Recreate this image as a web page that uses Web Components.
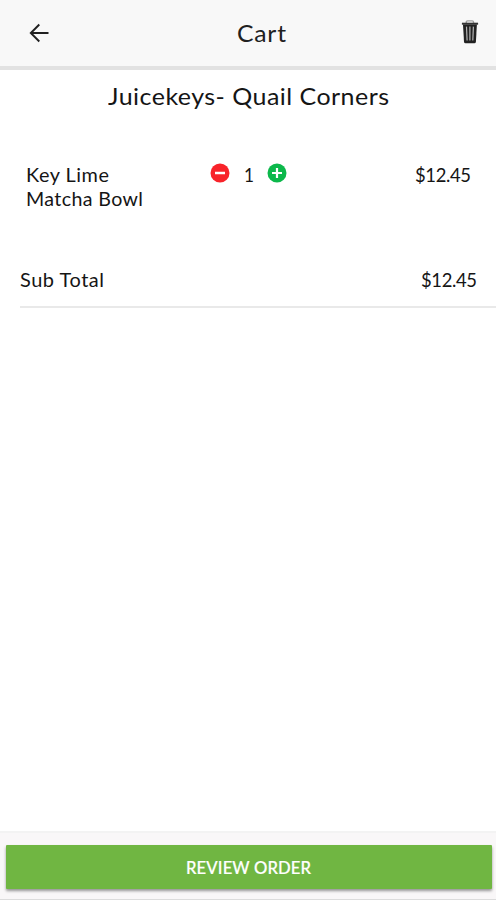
<!DOCTYPE html>
<html lang="en">
<head>
<meta charset="utf-8">
<title>Cart</title>
<style>
html,body{margin:0;height:100%;background:#fff}
body{font-family:Lato,"Open Sans",sans-serif;color:#151515;overflow:hidden}
</style>
</head>
<body>
<cart-screen></cart-screen>
<script>
class Base extends HTMLElement {
  constructor() {
    super();
    this.attachShadow({mode: 'open'}).innerHTML = this.constructor.html;
  }
}

/* A single line of text fitted to a given width, half by glyph width and half by tracking. */
class TrackedText extends Base {
  static html = `<style>:host{display:block;white-space:nowrap}span{display:inline-block;transform-origin:0 50%}</style><span><slot></slot></span>`;
  connectedCallback() {
    const span = this.shadowRoot.querySelector('span');
    const n = this.textContent.length;
    const target = Number(this.getAttribute('width'));
    const natural = span.getBoundingClientRect().width;
    const scale = Math.sqrt(target / natural);
    const gap = (target / scale - natural) / Math.max(1, n - 1);
    span.style.letterSpacing = gap + 'px';
    span.style.transform = `scaleX(${scale})`;
    this.style.width = target + 'px';
  }
}

class CartIcon extends Base {
  static html = `<style>:host{display:block;line-height:0}svg{display:block;overflow:visible}</style>`;
  static shapes = {
    back: [20, 20, '<path d="M19.500 10H1.800M10.300 1.500 1.800 10l8.500 8.500" fill="none" stroke="#202020" stroke-width="1.900"/>'],
    trash: [18, 24, '<path d="M5.3 3.2V2.1Q5.3.9 6.5.9h4.8q1.2 0 1.2 1.2v1.1" fill="none" stroke="#a0a0a0" stroke-width="1.400"/><path d="M.9 2.700h16.200v2H.900z" fill="#333"/><path d="M2 4.500h13.900l-1 17.200q-.1 1.500-1.500 1.500H4.500Q3.100 23.200 3 21.700z" fill="#222"/><path d="M5.500 6.600 6.100 20.500M8.900 6.600v13.900M12.400 6.600l-.6 13.900" stroke="#b5b5b5" stroke-width="1.200"/>'],
    minus: [20, 20, '<circle cx="10" cy="10" r="9.500" fill="#f8232a"/><path d="M5 10h10" stroke="#fff" stroke-width="2.500"/>'],
    plus: [20, 20, '<circle cx="10" cy="10" r="9.500" fill="#0cb84b"/><path d="M5 10h10M10 5v10" stroke="#fff" stroke-width="2.200"/>']
  };
  connectedCallback() {
    const [w, h, body] = CartIcon.shapes[this.getAttribute('name')];
    this.shadowRoot.innerHTML = CartIcon.html + `<svg width="${w}" height="${h}" viewBox="0 0 ${w} ${h}">${body}</svg>`;
  }
}

class CartHeader extends Base {
  static html = `<style>
    :host{display:grid;grid-template-columns:1fr auto 1fr;align-items:center;box-sizing:border-box;height:70px;
      padding:0 17px 0 29px;background:#f8f8f8;border-bottom:4px solid #e2e2e2;font-size:23.500px;line-height:28px;color:#202020}
    ::slotted([slot=end]){justify-self:end;margin-bottom:3px}
    ::slotted([slot=title]){margin-right:-14px}
    </style><slot name="start"></slot><slot name="title"></slot><slot name="end"></slot>`;
}

class CartItem extends Base {
  static html = `<style>
    :host{display:grid;grid-template-columns:184px 1fr auto;align-items:start;font-size:19px;line-height:24px;padding:0 25px 0 26px}
    .qty{display:flex;align-items:flex-start;gap:14px}
    .count{display:flex;justify-content:center;width:9px}
    </style>
    <div><slot name="name"></slot></div>
    <div class="qty"><cart-icon name="minus"></cart-icon><div class="count"><slot name="count"></slot></div><cart-icon name="plus"></cart-icon></div>
    <slot name="price"></slot>`;
}

class CartTotal extends Base {
  static html = `<style>
    :host{display:flex;justify-content:space-between;box-sizing:border-box;height:40px;margin-left:20px;padding-right:19px;
      border-bottom:2px solid #e9e9e9;font-size:19px;line-height:24px}
    </style><slot></slot>`;
}

class CartFooter extends Base {
  static html = `<style>
    :host{display:block;box-sizing:border-box;height:69px;padding:12px 4px 0 6px;background:#f9f7f8;border-top:2px solid #f3f3f3;border-bottom:1px solid #dcdcdc}
    button{display:flex;align-items:center;justify-content:center;box-sizing:border-box;width:100%;height:44px;border:0;border-radius:1px;padding:2px 2px 0 0;
      background:#70b642;color:#fff;font:500 16.500px/22px Lato,sans-serif;-webkit-text-stroke:.2px #fff;box-shadow:0 2px 3px rgba(0,0,0,.4)}
    </style><button><slot></slot></button>`;
}

class CartScreen extends Base {
  static html = `<style>
    :host{display:flex;flex-direction:column;height:100vh}
    .store{align-self:center;font-size:24px;line-height:30px;margin:11px 0 52px 1px}
    cart-total{margin-top:57px}
    cart-footer{margin-top:auto}
    </style>
    <cart-header>
      <cart-icon slot="start" name="back"></cart-icon>
      <tracked-text slot="title" width="49">Cart</tracked-text>
      <cart-icon slot="end" name="trash"></cart-icon>
    </cart-header>
    <tracked-text class="store" width="281">Juicekeys- Quail Corners</tracked-text>
    <cart-item>
      <tracked-text slot="name" width="83">Key Lime</tracked-text>
      <tracked-text slot="name" width="117">Matcha Bowl</tracked-text>
      <tracked-text slot="count" width="9">1</tracked-text>
      <tracked-text slot="price" width="56">$12.45</tracked-text>
    </cart-item>
    <cart-total>
      <tracked-text width="84">Sub Total</tracked-text>
      <tracked-text width="56">$12.45</tracked-text>
    </cart-total>
    <cart-footer><tracked-text width="125">REVIEW ORDER</tracked-text></cart-footer>`;
}

customElements.define('cart-icon', CartIcon);
customElements.define('cart-header', CartHeader);
customElements.define('cart-item', CartItem);
customElements.define('cart-total', CartTotal);
customElements.define('cart-footer', CartFooter);
customElements.define('cart-screen', CartScreen);
customElements.define('tracked-text', TrackedText);
</script>
</body>
</html>
